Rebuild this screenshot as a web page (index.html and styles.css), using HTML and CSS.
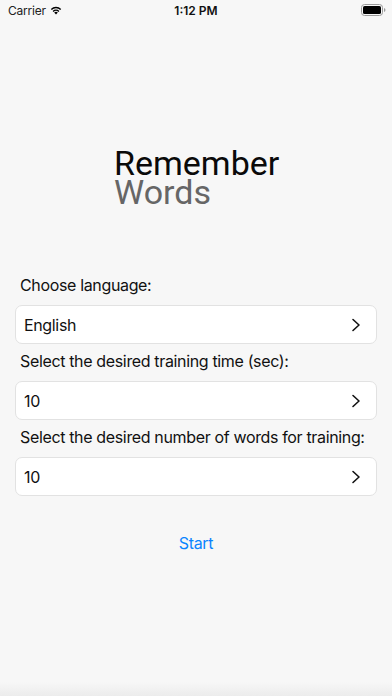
FILE: index.html
```html
<!DOCTYPE html>
<html lang="en">
<head>
<meta charset="utf-8">
<title>Remember Words</title>
<link rel="stylesheet" href="styles.css">
</head>
<body>
<div class="screen">
  <div class="status-bar">
    <div class="status-left">
      <span class="carrier">Carrier</span>
      <svg class="wifi" width="12" height="10" viewBox="0 0 12 10">
        <path d="M6 9.6 L4.2 7.6 A2.6 2.6 0 0 1 7.8 7.6 Z" fill="#000"/>
        <path d="M2.6 5.9 A4.9 4.9 0 0 1 9.4 5.9 L8.4 7 A3.5 3.5 0 0 0 3.6 7 Z" fill="#000"/>
        <path d="M0.8 3.9 A7.5 7.5 0 0 1 11.2 3.9 L10.2 5 A6.1 6.1 0 0 0 1.8 5 Z" fill="#000"/>
      </svg>
    </div>
    <div class="status-time">1:12 PM</div>
    <div class="status-right">
      <svg class="battery" width="25" height="12" viewBox="0 0 25 12">
        <rect x="0.5" y="0.5" width="21" height="11" rx="3" ry="3" fill="none" stroke="#9a9a9a" stroke-width="1"/>
        <rect x="2" y="2" width="18" height="8" rx="1.6" ry="1.6" fill="#000"/>
        <path d="M23 4 Q24.5 4.3 24.5 6 Q24.5 7.7 23 8 Z" fill="#9a9a9a"/>
      </svg>
    </div>
  </div>

  <div class="title">Remember<br><span class="title-sub">Words</span></div>

  <div class="form">
    <div class="label">Choose language:</div>
    <div class="select">
      <span class="select-value">English</span>
      <svg class="chevron" width="10" height="14" viewBox="0 0 10 14"><path d="M2 1.5 L8 7 L2 12.5" fill="none" stroke="#111" stroke-width="1.6" stroke-linecap="round" stroke-linejoin="round"/></svg>
    </div>
    <div class="label">Select the desired training time (sec):</div>
    <div class="select">
      <span class="select-value">10</span>
      <svg class="chevron" width="10" height="14" viewBox="0 0 10 14"><path d="M2 1.5 L8 7 L2 12.5" fill="none" stroke="#111" stroke-width="1.6" stroke-linecap="round" stroke-linejoin="round"/></svg>
    </div>
    <div class="label">Select the desired number of words for training:</div>
    <div class="select">
      <span class="select-value">10</span>
      <svg class="chevron" width="10" height="14" viewBox="0 0 10 14"><path d="M2 1.5 L8 7 L2 12.5" fill="none" stroke="#111" stroke-width="1.6" stroke-linecap="round" stroke-linejoin="round"/></svg>
    </div>
  </div>

  <div class="start-wrap">
    <button class="start">Start</button>
  </div>
</div>
</body>
</html>
```

FILE: styles.css
```css
html, body {
  margin: 0;
  padding: 0;
}
body {
  width: 392px;
  height: 696px;
  overflow: hidden;
  background: linear-gradient(to bottom, #f7f7f7 0, #f7f7f7 682px, #ececec 696px);
  font-family: "Inter", "Liberation Sans", sans-serif;
  color: #111;
}
.screen {
  display: flex;
  flex-direction: column;
  height: 696px;
}
.status-bar {
  height: 20px;
  display: flex;
  align-items: center;
  justify-content: space-between;
  padding: 0 6px 0 8px;
  position: relative;
  font-size: 12px;
}
.status-left {
  display: flex;
  align-items: center;
  gap: 4px;
}
.carrier {
  color: #222;
  letter-spacing: -0.2px;
}
.wifi {
  display: block;
  margin-top: -1px;
}
.status-time {
  position: absolute;
  left: 0;
  right: 0;
  text-align: center;
  font-weight: 600;
  font-size: 12px;
  pointer-events: none;
}
.status-right {
  display: flex;
  align-items: center;
}
.battery {
  display: block;
}
.title {
  margin-top: 129px;
  padding-left: 114px;
  font-family: "Roboto", "Liberation Sans", sans-serif;
  font-size: 34px;
  line-height: 29px;
  color: #0a0a0a;
}
.title-sub {
  color: #666666;
}
.form {
  margin-top: 61px;
  padding: 0 15px;
  display: flex;
  flex-direction: column;
}
.label {
  font-size: 16px;
  line-height: 20px;
  letter-spacing: -0.35px;
  padding: 7px 0 10px 5px;
  color: #111;
  white-space: nowrap;
}
.select {
  height: 37px;
  background: #fff;
  border: 1px solid #e2e2e2;
  border-radius: 7px;
  display: flex;
  align-items: center;
  justify-content: space-between;
  padding: 0 15px 0 8px;
}
.select-value {
  font-size: 16px;
  letter-spacing: -0.35px;
  color: #111;
}
.chevron {
  display: block;
}
.start-wrap {
  display: flex;
  justify-content: center;
  margin-top: 37px;
}
.start {
  background: none;
  border: none;
  padding: 0;
  font-family: "Inter", "Liberation Sans", sans-serif;
  font-size: 16px;
  letter-spacing: -0.3px;
  line-height: 20px;
  color: #0a84ff;
}
```
